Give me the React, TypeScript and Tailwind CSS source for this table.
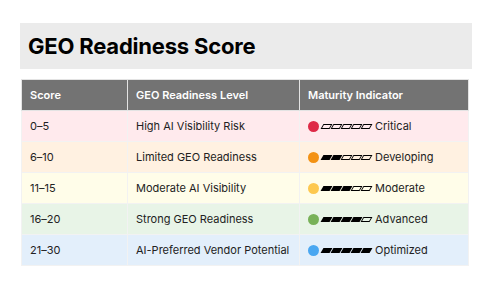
import React from 'react';

const rows = [
  { score: '0–5', level: 'High AI Visibility Risk', filled: 0, label: 'Critical', bg: 'bg-[#ffeaed]', dot: 'bg-[#de2a47]' },
  { score: '6–10', level: 'Limited GEO Readiness', filled: 2, label: 'Developing', bg: 'bg-[#fff1e1]', dot: 'bg-[#f39214]' },
  { score: '11–15', level: 'Moderate AI Visibility', filled: 3, label: 'Moderate', bg: 'bg-[#fffde9]', dot: 'bg-[#fdc84f]' },
  { score: '16–20', level: 'Strong GEO Readiness', filled: 4, label: 'Advanced', bg: 'bg-[#e8f4e7]', dot: 'bg-[#78b158]' },
  { score: '21–30', level: 'AI-Preferred Vendor Potential', filled: 5, label: 'Optimized', bg: 'bg-[#e3effb]', dot: 'bg-[#4aa7f1]' },
];

export default function App() {
  return (
    <div className="w-[492px] h-[298px] bg-white px-5 pt-[23px]" style={{ fontFamily: 'Inter, "Noto Sans", sans-serif' }}>
      <div className="h-[46px] bg-[#ebebeb] flex items-center px-2">
        <h1 className="text-[22px] font-bold text-black tracking-[-0.2px]">GEO Readiness Score</h1>
      </div>
      <table className="mt-[10px] ml-px w-[448px] border-collapse text-[11px] text-[#222]">
        <thead>
          <tr className="bg-[#737373] text-white h-[31px]">
            <th className="w-[106px] border border-[#e3e3e3] px-2 text-left font-semibold">Score</th>
            <th className="w-[172px] border border-[#e3e3e3] px-2 text-left font-semibold">GEO Readiness Level</th>
            <th className="border border-[#e3e3e3] px-2 text-left font-semibold">Maturity Indicator</th>
          </tr>
        </thead>
        <tbody>
          {rows.map((r) => (
            <tr key={r.score} className={`${r.bg} h-[31px]`}>
              <td className="border border-[#f2f2f2] px-2">{r.score}</td>
              <td className="border border-[#f2f2f2] px-2">{r.level}</td>
              <td className="border border-[#f2f2f2] px-2">
                <div className="flex items-center">
                  <span className={`w-[11px] h-[11px] rounded-full ${r.dot}`} />
                  <span className="ml-[3px] flex items-center gap-[1px]">
                    {[0, 1, 2, 3, 4].map((i) => (
                      <span
                        key={i}
                        className={`w-[9px] h-[5px] -skew-x-[30deg] ${i < r.filled ? 'bg-black' : 'border border-black'}`}
                      />
                    ))}
                  </span>
                  <span className="ml-[4px]">{r.label}</span>
                </div>
              </td>
            </tr>
          ))}
        </tbody>
      </table>
    </div>
  );
}
